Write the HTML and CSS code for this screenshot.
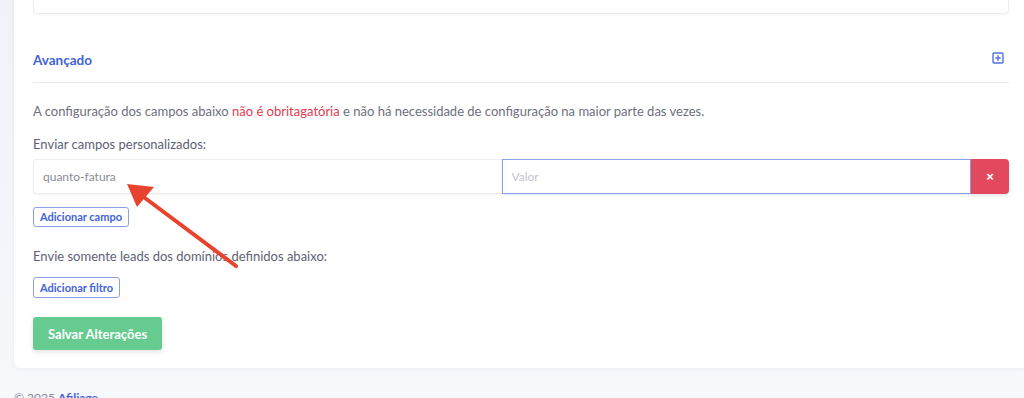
FILE: index.html
```html
<!DOCTYPE html>
<html lang="pt-BR">
<head>
  <meta charset="UTF-8" />
  <meta name="viewport" content="width=device-width, initial-scale=1" />
  <title>Avançado</title>
  <link rel="stylesheet" href="styles.css">
</head>
<body>
  <div class="page">
    <div class="card">
      <div class="top-field">ooooo oooo</div>

      <div class="section-head">
        <h6>Avançado</h6>
        <svg class="toggle" viewBox="0 0 12 12" width="12" height="12">
          <rect x="1" y="1" width="10" height="10" rx="1" fill="none" stroke="#4e73df" stroke-width="1.4"/>
          <path d="M6 3.3v5.4M3.3 6h5.4" stroke="#4e73df" stroke-width="1.4"/>
        </svg>
      </div>

      <p class="hint">A configuração dos campos abaixo <span class="red">não é obritagatória</span> e não há necessidade de configuração na maior parte das vezes.</p>

      <div class="label">Enviar campos personalizados:</div>
      <div class="field-row">
        <input type="text" class="field" value="quanto-fatura">
        <input type="text" class="field focus" placeholder="Valor">
        <button class="remove">×</button>
      </div>
      <button class="btn-outline">Adicionar campo</button>

      <div class="label second">Envie somente leads dos domínios definidos abaixo:</div>
      <button class="btn-outline small-gap">Adicionar filtro</button>

      <button class="btn-save">Salvar Alterações</button>
    </div>

    <footer class="footer">© 2025 <strong>Afiliage</strong></footer>
  </div>

  <svg class="arrow" width="1024" height="398" viewBox="0 0 1024 398">
    <line x1="236" y1="266" x2="145" y2="198" stroke="#e8432f" stroke-width="4" stroke-linecap="round"/>
    <polygon points="127,184 154,187 137,207" fill="#e8432f"/>
  </svg>
</body>
</html>
```

FILE: styles.css
```css
html, body {
  margin: 0;
  overflow: hidden;
}

body {
  background: linear-gradient(#f1f2f8, #f7f8fc);
  color: #6e707e;
  font-family: Lato, 'Open Sans', sans-serif;
  font-size: 13px;
  height: 398px;
  position: relative;
}

.page {
  padding-left: 14px;
}

.card {
  background: #fff;
  margin-right: -4px;
  padding: 0 19px 18px 19px;
  border-radius: 0 0 6px 6px;
  box-shadow: 0 1px 4px rgba(58, 59, 69, 0.06);
  display: flex;
  flex-direction: column;
  align-items: flex-start;
}

.top-field {
  align-self: stretch;
  margin-top: -22px;
  height: 36px;
  border: 1px solid #eceef3;
  border-radius: 4px;
  box-shadow: 0 1px 2px rgba(0, 0, 0, 0.04);
  color: #c4c6d0;
  font-size: 12px;
  padding: 6px 10px;
  box-sizing: border-box;
}

.section-head {
  align-self: stretch;
  margin-top: 36px;
  display: flex;
  justify-content: space-between;
  align-items: center;
  padding: 0 5px 12px 0;
  border-bottom: 1px solid #e8eaf0;
}

.section-head h6 {
  margin: 0;
  font-size: 13.5px;
  line-height: 20px;
  font-weight: 700;
  color: #3f63d8;
}

.toggle {
  display: block;
  margin-top: -4px;
}

.hint {
  margin: 18px 0 0;
  line-height: 20px;
}

.red {
  color: #e43a4f;
}

.label {
  margin-top: 13px;
  line-height: 20px;
  color: #5e6173;
}

.label.second {
  margin-top: 19px;
}

.field-row {
  align-self: stretch;
  display: flex;
  margin-top: 5px;
  height: 35px;
}

.field {
  flex: 1;
  min-width: 0;
  margin: 0;
  box-sizing: border-box;
  height: 35px;
  border: 1px solid #eceef3;
  border-right: none;
  padding: 0 9px;
  font-family: inherit;
  font-size: 12px;
  color: #8a8c98;
  outline: none;
  box-shadow: 0 1px 2px rgba(0, 0, 0, 0.04);
}

.field:first-child {
  border-radius: 3px 0 0 3px;
}

.field.focus {
  border: 1px solid #8ba0e8;
  box-shadow: 0 1px 2px rgba(78, 115, 223, 0.18);
}

.field::placeholder {
  color: #c3c5ce;
}

.remove {
  width: 38px;
  height: 35px;
  margin: 0;
  border: none;
  border-radius: 0 4px 4px 0;
  background: #e2495f;
  color: #fff;
  font-size: 13px;
  font-weight: 700;
  line-height: 1;
  padding: 0;
  box-shadow: 0 2px 4px rgba(0, 0, 0, 0.1);
}

.btn-outline {
  margin-top: 13px;
  height: 20px;
  padding: 0 6px;
  background: #fff;
  border: 1px solid #8ba0e8;
  border-radius: 3px;
  color: #3f63d8;
  font-family: inherit;
  font-size: 11px;
  font-weight: 700;
  line-height: 18px;
}

.btn-outline.small-gap {
  margin-top: 11px;
  height: 21px;
}

.btn-save {
  margin-top: 19px;
  height: 33px;
  padding: 0 15px;
  background: #66cb8f;
  border: none;
  border-radius: 3px;
  color: #fff;
  font-family: inherit;
  font-size: 13px;
  font-weight: 700;
  box-shadow: 0 2px 5px rgba(58, 59, 69, 0.15);
}

.footer {
  margin-top: 22px;
  font-size: 12px;
  color: #858796;
}

.footer strong {
  color: #3f63d8;
}

.arrow {
  position: absolute;
  left: 0;
  top: 0;
  pointer-events: none;
}
```
